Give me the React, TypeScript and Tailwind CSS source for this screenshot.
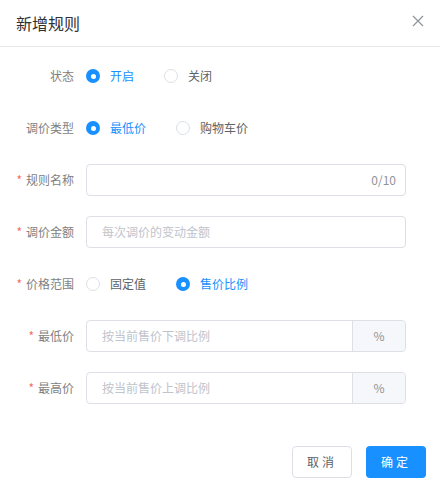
import React from 'react';

const font = { fontFamily: '"Noto Sans CJK SC", "Noto Sans", sans-serif' };

const Radio = ({ label, checked, last }: { label: string; checked?: boolean; last?: boolean }) => (
  <label className={`flex items-center gap-[10px] ${last ? '' : 'mr-[30px]'}`}>
    {checked ? (
      <span className="w-[14px] h-[14px] rounded-full bg-[#1890ff] flex items-center justify-center">
        <span className="w-[5px] h-[5px] rounded-full bg-white" />
      </span>
    ) : (
      <span className="w-[14px] h-[14px] rounded-full border border-[#dcdfe6] bg-white" />
    )}
    <span className={`text-[12px] ${checked ? 'text-[#1890ff]' : 'text-[#606266]'}`}>{label}</span>
  </label>
);

const Row = ({ label, required, children }: { label: string; required?: boolean; children: React.ReactNode }) => (
  <div className="flex items-center h-8 mb-5">
    <div className="w-[86px] pr-3 text-right text-[12px] text-[#7f7f7f]">
      {required && <span className="text-[#f56c6c] mr-1">*</span>}
      {label}
    </div>
    <div className="flex items-center w-[320px]">{children}</div>
  </div>
);

export default function App() {
  return (
    <div className="w-[440px] h-[489px] bg-white" style={font}>
      {/* 标题栏 */}
      <div className="h-[47px] flex items-center justify-between pl-4 pr-[16px] border-b border-[#e8e8e8]">
        <span className="text-[16px] text-[#303133]">新增规则</span>
        <svg width="12" height="12" viewBox="0 0 12 12" className="mt-[-4px]">
          <path d="M1 1 L11 11 M11 1 L1 11" stroke="#909399" strokeWidth="1.2" />
        </svg>
      </div>

      <div className="pt-[13px]">
        <Row label="状态">
          <Radio label="开启" checked />
          <Radio label="关闭" last />
        </Row>
        <Row label="调价类型">
          <Radio label="最低价" checked />
          <Radio label="购物车价" last />
        </Row>
        <Row label="规则名称" required>
          <div className="w-full h-8 border border-[#dcdfe6] rounded flex items-center justify-end pr-[9px]">
            <span className="text-[12px] text-[#909399]">0/10</span>
          </div>
        </Row>
        <Row label="调价金额" required>
          <div className="w-full h-8 border border-[#dcdfe6] rounded flex items-center pl-[15px]">
            <span className="text-[12px] text-[#c0c4cc]">每次调价的变动金额</span>
          </div>
        </Row>
        <Row label="价格范围" required>
          <Radio label="固定值" />
          <Radio label="售价比例" checked last />
        </Row>
        <Row label="最低价" required>
          <div className="w-full h-8 border border-[#dcdfe6] rounded flex">
            <div className="flex-1 flex items-center pl-[15px]">
              <span className="text-[12px] text-[#c0c4cc]">按当前售价下调比例</span>
            </div>
            <div className="w-[53px] bg-[#f5f7fa] border-l border-[#dcdfe6] rounded-r flex items-center justify-center text-[12px] text-[#909399]">
              %
            </div>
          </div>
        </Row>
        <Row label="最高价" required>
          <div className="w-full h-8 border border-[#dcdfe6] rounded flex">
            <div className="flex-1 flex items-center pl-[15px]">
              <span className="text-[12px] text-[#c0c4cc]">按当前售价上调比例</span>
            </div>
            <div className="w-[53px] bg-[#f5f7fa] border-l border-[#dcdfe6] rounded-r flex items-center justify-center text-[12px] text-[#909399]">
              %
            </div>
          </div>
        </Row>
      </div>

      {/* 底部按钮 */}
      <div className="flex justify-end gap-[14px] pr-[14px] pt-[22px]">
        <button className="w-[60px] h-8 border border-[#dcdfe6] rounded bg-white text-[12px] text-[#606266] tracking-[3px]">
          取消
        </button>
        <button className="w-[60px] h-8 rounded bg-[#1890ff] text-[12px] text-white tracking-[3px]">
          确定
        </button>
      </div>
    </div>
  );
}
